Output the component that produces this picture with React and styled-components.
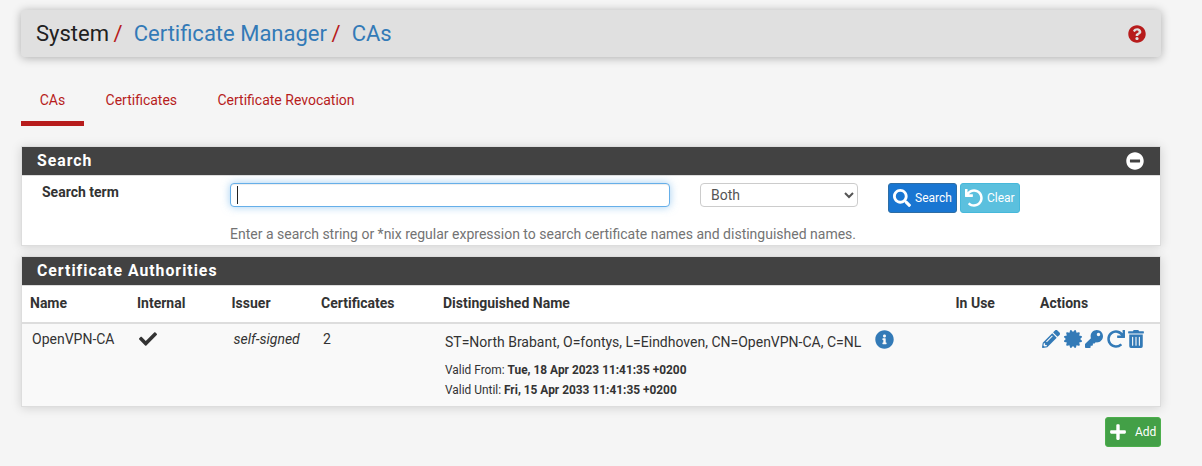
import React from "react";
import styled, { createGlobalStyle, css } from "styled-components";
import {
  FaQuestionCircle,
  FaMinusCircle,
  FaSearch,
  FaUndo,
  FaCheck,
  FaInfoCircle,
  FaPencilAlt,
  FaCertificate,
  FaKey,
  FaRedo,
  FaTrashAlt,
  FaPlus,
} from "react-icons/fa";

const GlobalStyle = createGlobalStyle`
  *, *::before, *::after { box-sizing: border-box; }
  body {
    margin: 0;
    background: #f5f5f5;
    color: #333;
    font-family: Roboto, "Liberation Sans", sans-serif;
    font-size: 14px;
    line-height: 20px;
  }
  svg { display: block; flex: none; }
`;

const Page = styled.main`
  height: 466px;
  padding: 10px 41px 0 21px;
  overflow: hidden;
`;

const PageHeader = styled.header`
  display: flex;
  align-items: center;
  justify-content: space-between;
  height: 47px;
  padding: 0 15px;
  background: #e0e0e0;
  border-radius: 4px;
  box-shadow: 0 1px 10px rgba(0, 0, 0, 0.3);
  color: #b71c1c;
`;

const Breadcrumb = styled.nav`
  display: flex;
  font-size: 22px;
  line-height: 30px;
`;

const Crumb = styled.span`
  color: ${(p) => (p.$link ? "#337ab7" : "#212121")};
  &:not(:first-child)::before {
    content: "/";
    color: #b71c1c;
    padding: 0 11px 0 4.6px;
  }
`;

const Tabs = styled.nav`
  display: flex;
  gap: 3px;
  margin-top: 20px;
  height: 49px;
`;

const Tab = styled.a`
  padding: 13px 18.7px 0 18.7px;
  color: #b71c1c;
  font-size: 14px;
  border-bottom: 5px solid ${(p) => (p.$active ? "#b71c1c" : "transparent")};
`;

const Panel = styled.section`
  height: ${(p) => p.$height}px;
  margin-top: ${(p) => p.$gap}px;
  background: #fff;
  border: 1px solid #ddd;
  box-shadow: 0 1px 10px rgba(0, 0, 0, 0.15);
`;

const PanelTitle = styled.h2`
  display: flex;
  align-items: center;
  justify-content: space-between;
  height: 29px;
  margin: 0;
  padding: 0 16px 0 15px;
  background: #424242;
  border-bottom: 1px solid #ddd;
  color: #fff;
  font-size: 15.8px;
  font-weight: 700;
  letter-spacing: 1px;
`;

const SearchForm = styled.div`
  display: grid;
  grid-template-columns: 188px 440px 30px 158px 30px 1fr;
  padding: 7px 0 0 20px;
`;

const Label = styled.label`
  margin-top: -1px;
  font-weight: 700;
`;

const SearchInput = styled.div`
  height: 24px;
  border: 1px solid #66afe9;
  border-radius: 4px;
  background: #fff;
  padding: 2px 6px;
  box-shadow: inset 0 1px 1px rgba(0, 0, 0, 0.075), 0 0 8px rgba(102, 175, 233, 0.6);
`;

const Caret = styled.span`
  display: block;
  width: 1px;
  height: 18px;
  background: #222;
`;

const Select = styled.select`
  grid-column: 4;
  width: 158px;
  height: 24px;
  padding: 0 6px;
  border: 1px solid #ccc;
  border-radius: 4px;
  background: #fff;
  color: #555;
  font: 14px Roboto, sans-serif;
`;

const Help = styled.p`
  grid-column: 2 / -1;
  margin: 11px 0 0;
  color: #737373;
`;

const Buttons = styled.div`
  grid-column: 6;
  display: flex;
  gap: 3px;
  height: 30px;
`;

const tones = {
  primary: ["#1976d2", "#2e6da4"],
  info: ["#5bc0de", "#46b8da"],
  success: ["#43a047", "#4cae4c"],
};

const Button = styled.button`
  display: flex;
  align-items: center;
  gap: ${(p) => p.$gap || 4}px;
  height: 30px;
  width: ${(p) => p.$width}px;
  padding: 0 4px;
  border: 1px solid ${(p) => tones[p.$tone][1]};
  border-radius: 3px;
  background: ${(p) => tones[p.$tone][0]};
  color: #fff;
  font: 12px Roboto, sans-serif;
  white-space: nowrap;
`;

const AddButton = styled(Button)`
  padding: 0 3px;
`;

const columns = css`
  display: grid;
  grid-template-columns: 107px 94.5px 89.5px 122px 512.5px 84.5px 1fr;
`;

const HeadRow = styled.div`
  ${columns}
  height: 38px;
  padding: 7px 0 0 8px;
  font-weight: 700;
  border-bottom: 2px solid #ddd;
`;

const Row = styled.div`
  ${columns}
  height: 82px;
  padding: 5px 0 0 10px;
  background: #f9f9f9;
`;

const Cell = styled.div`
  font-style: ${(p) => (p.$italic ? "italic" : "normal")};
`;

const IconCell = styled(Cell)`
  padding-top: 1px;
`;

const DnLine = styled.div`
  display: flex;
  gap: 14px;
  span { padding-top: 3px; }
  svg { margin-top: 1px; color: #337ab7; }
`;

const Validity = styled.div`
  margin-top: 8px;
  font-size: 11.9px;
`;

const Actions = styled.div`
  display: flex;
  gap: 3.5px;
  padding-top: 1px;
  color: #337ab7;
  svg:last-child { margin-left: -1px; }
`;

const Footer = styled.footer`
  display: flex;
  justify-content: flex-end;
  margin-top: 10px;
`;

export default function App() {
  return (
    <>
      <GlobalStyle />
      <Page>
        <PageHeader>
          <Breadcrumb>
            <Crumb>System</Crumb>
            <Crumb $link>Certificate Manager</Crumb>
            <Crumb $link>CAs</Crumb>
          </Breadcrumb>
          <FaQuestionCircle size={18} />
        </PageHeader>

        <Tabs>
          <Tab $active>CAs</Tab>
          <Tab>Certificates</Tab>
          <Tab>Certificate Revocation</Tab>
        </Tabs>

        <Panel $height={100} $gap={20}>
          <PanelTitle>
            Search
            <FaMinusCircle size={18} />
          </PanelTitle>
          <SearchForm>
            <Label>Search term</Label>
            <SearchInput>
              <Caret />
            </SearchInput>
            <Select defaultValue="Both">
              <option>Both</option>
            </Select>
            <Buttons>
              <Button $tone="primary" $width={69}>
                <FaSearch size={18} />
                Search
              </Button>
              <Button $tone="info" $width={60}>
                <FaUndo size={18} />
                Clear
              </Button>
            </Buttons>
            <Help>
              Enter a search string or *nix regular expression to search certificate names and
              distinguished names.
            </Help>
          </SearchForm>
        </Panel>

        <Panel $height={151} $gap={10}>
          <PanelTitle>Certificate Authorities</PanelTitle>
          <HeadRow>
            <span>Name</span>
            <span>Internal</span>
            <span>Issuer</span>
            <span>Certificates</span>
            <span>Distinguished Name</span>
            <span>In Use</span>
            <span>Actions</span>
          </HeadRow>
          <Row>
            <Cell>OpenVPN-CA</Cell>
            <IconCell>
              <FaCheck size={18} />
            </IconCell>
            <Cell $italic>self-signed</Cell>
            <Cell>2</Cell>
            <Cell>
              <DnLine>
                <span>ST=North Brabant, O=fontys, L=Eindhoven, CN=OpenVPN-CA, C=NL</span>
                <FaInfoCircle size={19} />
              </DnLine>
              <Validity>
                <div>
                  Valid From: <b>Tue, 18 Apr 2023 11:41:35 +0200</b>
                </div>
                <div>
                  Valid Until: <b>Fri, 15 Apr 2033 11:41:35 +0200</b>
                </div>
              </Validity>
            </Cell>
            <Cell />
            <Actions>
              <FaPencilAlt size={18} />
              <FaCertificate size={18} />
              <FaKey size={18} />
              <FaRedo size={18} />
              <FaTrashAlt size={18} />
            </Actions>
          </Row>
        </Panel>

        <Footer>
          <AddButton $tone="success" $width={56} $gap={8}>
            <FaPlus size={18} />
            Add
          </AddButton>
        </Footer>
      </Page>
    </>
  );
}
